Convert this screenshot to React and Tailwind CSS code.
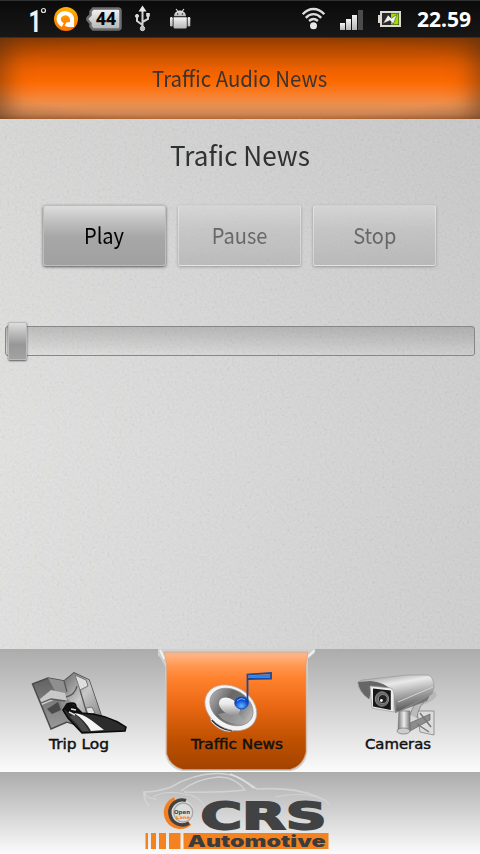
import React from "react";

function StatusBar() {
  return (
    <header className="h-[38px] w-full shrink-0 border-y border-[#303030] bg-gradient-to-b from-[#0b0b0b] to-[#171717]">
      <svg width="480" height="36" viewBox="0 1 480 36" className="block overflow-visible">
        <defs>
          <linearGradient id="silver" x1="0" y1="0" x2="0" y2="1">
            <stop offset="0" stopColor="#f4f4f4" />
            <stop offset="1" stopColor="#b4b4b4" />
          </linearGradient>
          <linearGradient id="amber" x1="0" y1="0" x2="0" y2="1">
            <stop offset="0" stopColor="#ffb400" />
            <stop offset="1" stopColor="#ff7200" />
          </linearGradient>
        </defs>
        <text x="28.5" y="31.5" fontFamily="Roboto, sans-serif" fontWeight="700" fontSize="32" textLength="13" lengthAdjust="spacingAndGlyphs" fill="#f2f2f2">1</text>
        <circle cx="43.5" cy="10.5" r="2" fill="none" stroke="#e4e4e4" strokeWidth="1.2" />
        <circle cx="66" cy="19" r="12" fill="url(#amber)" />
        <path d="M62.8 25.2C56.8 22 57.8 15 63 13.6C68 12.2 72 15.4 72 19.5V25H67.5" fill="none" stroke="#fff" strokeWidth="4.2" />
        <circle cx="66.6" cy="20.4" r="3.1" fill="#ff8c00" />
        <path d="M64.6 25.5L66.4 22.5L70 22V26.4H66Z" fill="#fff" />
        <path d="M93 8.5H118Q120.5 8.5 120.5 11V27Q120.5 29.5 118 29.5H93L90.5 26.5V23.5L87.5 20V18L90.5 15V11.5Z" fill="url(#silver)" stroke="#6c6c6c" strokeWidth="2.5" />
        <text x="96" y="25.2" fontFamily="'Noto Sans', sans-serif" fontWeight="800" fontSize="17" textLength="20" lengthAdjust="spacingAndGlyphs" fill="#080808">44</text>
        <g fill="none" stroke="#d4d4d4" strokeWidth="2">
          <path d="M142.5 10V28M142.5 25L137 21V16M142.5 22L148 19V15" />
          <circle cx="142.5" cy="28.5" r="2.2" fill="#bbb" strokeWidth="1" />
          <circle cx="137" cy="16" r="1.6" fill="#ddd" strokeWidth="1" />
          <rect x="146.2" y="13" width="3.6" height="3.6" fill="#ddd" stroke="none" />
          <path d="M142.5 5.5L146.5 11.5H138.5Z" fill="#e9e9e9" stroke="none" />
        </g>
        <g fill="url(#silver)">
          <path d="M174 16.3C174 13.5 175.5 12 177.2 11.2L175.6 9.2L176.4 8.8L178 10.8Q180 10.2 182 10.8L183.6 8.8L184.4 9.2L182.8 11.2C184.5 12 186 13.5 186 16.3Z" />
          <path d="M173.5 17.3H186.8V27Q186.8 28.6 185 28.6H175Q173.5 28.6 173.5 27Z" />
          <rect x="170" y="17" width="2.7" height="9.4" rx="1.2" />
          <rect x="187.6" y="17" width="2.7" height="9.4" rx="1.2" />
        </g>
        <circle cx="177.7" cy="14" r=".7" fill="#222" />
        <circle cx="182.5" cy="14" r=".7" fill="#222" />
        <g fill="none" stroke="#dcdcdc" strokeWidth="2.4">
          <path d="M302.7 14.2C309 7.3 318 7.3 324.3 14.2" />
          <path d="M305.8 17.8C310.5 12.9 316.5 12.9 321.2 17.8" />
          <path d="M309.1 21C312 18.3 315 18.3 317.9 21" />
        </g>
        <circle cx="313.5" cy="25.8" r="3.5" fill="#e8e8e8" />
        <g fill="url(#silver)">
          <rect x="340" y="23" width="5" height="7" />
          <rect x="346" y="19" width="5" height="11" />
          <rect x="352" y="15" width="5" height="15" />
        </g>
        <rect x="358" y="10" width="5" height="20" fill="#4c4c4c" />
        <path d="M380 11H401V27H380V23H378V15H380Z" fill="#dedacf" />
        <rect x="382" y="13" width="17" height="12" fill="#292929" />
        <rect x="391" y="13.5" width="7.5" height="11" fill="#9be000" />
        <path d="M383 23.5L388 15L391.3 18.2L397 14.5L393.3 24L390 20.5Z" fill="#f0f0f0" stroke="#333" strokeWidth=".5" />
        <text x="417" y="27" fontFamily="'Noto Sans', sans-serif" fontWeight="700" fontSize="21" textLength="54" lengthAdjust="spacingAndGlyphs" fill="#fff">22.59</text>
      </svg>
    </header>
  );
}

function AudioButton({ label, enabled = false }) {
  const look = enabled
    ? "border-[#bdbdbd] bg-[linear-gradient(180deg,#dddddd_0%,#c3c3c3_23%,#a7a7a7_52%,#a1a1a1_100%)] text-black shadow-[0_1px_3px_0px_rgba(0,0,0,0.6)]"
    : "border-white/35 bg-[linear-gradient(180deg,rgba(215,215,215,.65)_0%,rgba(190,190,190,.6)_40%,rgba(174,174,174,.65)_100%)] text-[#686868] shadow-[0_1px_3px_0px_rgba(0,0,0,0.28)]";
  return (
    <button className={`flex h-[61px] w-[123px] items-center justify-center rounded-[3px] border pb-[3px] text-[22px] leading-none ${look}`}>
      <span className="block scale-x-[.91]">{label}</span>
    </button>
  );
}

function MapIcon() {
  return (
    <svg x="30" y="670" width="98" height="66" viewBox="30 670 98 66">
      <defs>
        <linearGradient id="mapA" x1="0" y1="0" x2="0" y2="1">
          <stop offset="0" stopColor="#5c5c5c" /><stop offset="1" stopColor="#9a9a9a" />
        </linearGradient>
        <linearGradient id="mapB" x1="0" y1="0" x2="1" y2="1">
          <stop offset="0" stopColor="#6b6b6b" /><stop offset=".5" stopColor="#c8c8c8" /><stop offset="1" stopColor="#858585" />
        </linearGradient>
      </defs>
      <path d="M32.5 684L48 678L64 681L74 673L89 680L102 718L86 728L67 722L51 729Z" fill="url(#mapA)" stroke="#4b4b4b" strokeWidth="1.5" />
      <path d="M48 678L64 681L72 697L78 716L67 722L60 700Z" fill="#8f8f8f" />
      <path d="M64 681L74 673L89 680L102 718L84 716L66 697Z" fill="url(#mapB)" />
      <path d="M40 699L51 690L65 693L67 700L54 700L42 705Z" fill="#c9c9c9" />
      <path d="M75 675L86 680L88 686L80 690ZM86 708L92 707L95 713L88 715Z" fill="#dedede" stroke="#777" />
      <path d="M47 709L58 702L61 710L52 714Z" fill="#4a4a4a" />
      <path d="M41 703L51 699L65 701M64 681L67 692M66 697Q75 695 77 686M80 690L87 714" fill="none" stroke="#595959" strokeWidth="1.3" />
      <path d="M67 704Q76 701 76 707L82 713Q107 714 126 727L125 731L82 733L68 718L63 710Z" fill="#2c2c2c" stroke="#080808" strokeWidth="1.5" />
      <path d="M64 709Q65 703 72 704L78 709L82 714L70 714Z" fill="#101010" />
      <path d="M74 713Q83 714 91 720L104 730L91 731Q85 720 74 713Z" fill="#f5f5f5" />
      <path d="M70 717Q77 723 82 731L89 731Q82 719 74 714Z" fill="#4d4d4d" />
      <path d="M71 709L76 710M69 712L75 715" stroke="#ddd" strokeWidth="1.5" />
    </svg>
  );
}

function SpeakerIcon() {
  return (
    <svg x="200" y="670" width="76" height="66" viewBox="200 670 76 66">
      <defs>
        <linearGradient id="cone" x1="0" y1="0" x2="1" y2="0">
          <stop offset="0" stopColor="#a8a8a8" /><stop offset=".35" stopColor="#686868" /><stop offset=".6" stopColor="#6f6f6f" /><stop offset="1" stopColor="#bbb" />
        </linearGradient>
        <linearGradient id="core" x1="0" y1="0" x2="1" y2="1">
          <stop offset="0" stopColor="#fff" /><stop offset=".4" stopColor="#e9e9e9" /><stop offset="1" stopColor="#777" />
        </linearGradient>
        <radialGradient id="blueBall" cx=".5" cy=".75">
          <stop offset="0" stopColor="#65b8ff" /><stop offset="1" stopColor="#0749ce" />
        </radialGradient>
      </defs>
      <path d="M209 712L211 722Q219 731 229 732Q233 732 236 728Z" fill="#f0f0f0" stroke="#888" strokeWidth=".7" />
      <path d="M212 720Q220 729 232 730.5" fill="none" stroke="#292929" strokeWidth="2" />
      <ellipse cx="230.8" cy="707.8" rx="27.5" ry="21" transform="rotate(31 230.8 707.8)" fill="#f4f4f4" stroke="#b5aaa3" strokeWidth=".7" />
      <ellipse cx="231.5" cy="707" rx="23" ry="17" transform="rotate(31 231.5 707)" fill="url(#cone)" stroke="#888" strokeWidth=".7" />
      <path d="M218 714Q223 723 237 724Q242 724 245 721L236 711Z" fill="#a9a9a9" opacity=".6" />
      <ellipse cx="229.5" cy="706.5" rx="11.5" ry="7.6" transform="rotate(33 229.5 706.5)" fill="url(#core)" />
      <path d="M247.5 703V674.5L271 673V678.5L248 679" fill="none" stroke="#17499f" strokeWidth="1.8" />
      <path d="M249 675.5L270 674.5V677.5L249 678Z" fill="#2585f2" />
      <ellipse cx="241.5" cy="703" rx="6.8" ry="6" fill="url(#blueBall)" stroke="#0940ae" strokeWidth=".8" />
      <path d="M237 701Q241 697 245 700" fill="none" stroke="#7db8f8" />
    </svg>
  );
}

function CameraIcon() {
  return (
    <svg x="355" y="670" width="84" height="68" viewBox="355 670 84 68">
      <defs>
        <linearGradient id="camTop" x1="0" y1="0" x2=".35" y2="1">
          <stop offset="0" stopColor="#888" /><stop offset=".35" stopColor="#eaeaea" /><stop offset=".65" stopColor="#a9a9a9" /><stop offset="1" stopColor="#626262" />
        </linearGradient>
        <linearGradient id="metal">
          <stop offset="0" stopColor="#777" /><stop offset=".5" stopColor="#eee" /><stop offset="1" stopColor="#777" />
        </linearGradient>
      </defs>
      <ellipse cx="424" cy="698" rx="13" ry="6" transform="rotate(-20 424 698)" fill="#aaa" opacity=".55" />
      <path d="M417 711L434 711V735L420 732Z" fill="#dcdcdc" stroke="#777" strokeWidth=".7" />
      <path d="M410 723L430 714V720L410 731Z" fill="#8d8d8d" stroke="#666" strokeWidth=".7" />
      <path d="M417 724L429 732M420 713L431 727" stroke="#777" strokeWidth="1.5" />
      <path d="M410 715Q413 704 421 700L424 702Q418 708 417 718" fill="#bbb" stroke="#777" strokeWidth=".7" />
      <path d="M399 711H410V731Q404 735 398 731Z" fill="url(#metal)" stroke="#777" strokeWidth=".7" />
      <ellipse cx="403.5" cy="731" rx="6.5" ry="3" fill="#ccc" stroke="#777" strokeWidth=".7" />
      <path d="M395 713L427 701L432 691L394 699Z" fill="#777" />
      <path d="M358 682L362 680L407 675L428 675Q434 677 434 687L432 694L400 711L396 712Q395 693 388 690L372 687L369 699Q359 692 358 684Z" fill="url(#camTop)" stroke="#999" strokeWidth=".7" />
      <path d="M358 682L371 681Q386 683 391 690L372 687L369 699Q359 692 358 682Z" fill="#666" />
      <path d="M370 686L391 688Q394 690 394 694V712L372 708Z" fill="#ededed" stroke="#999" strokeWidth=".7" />
      <path d="M373 688.5L390.8 690.5V710L373 706.5Z" fill="#171717" />
      <ellipse cx="382" cy="699" rx="6.7" ry="7.2" fill="#666" stroke="#8a8a8a" strokeWidth="1" />
      <circle cx="382.8" cy="699" r="4.5" fill="#222" stroke="#999" strokeWidth=".8" />
      <circle cx="381.4" cy="700.5" r="1.4" fill="#fff" />
      <path d="M398 702L433 687" stroke="#d4d4d4" />
    </svg>
  );
}

function NavTabs() {
  return (
    <nav className="h-[123px] shrink-0 bg-gradient-to-b from-[#acacac] to-[#fbfbfb]">
      <svg width="480" height="123" viewBox="0 649 480 123" className="block">
        <defs>
          <linearGradient id="selected" x1="0" y1="0" x2="0" y2="1">
            <stop offset="0" stopColor="#e4b99d" /><stop offset=".03" stopColor="#ffb281" /><stop offset=".12" stopColor="#ff9650" /><stop offset=".23" stopColor="#ff812d" /><stop offset=".45" stopColor="#eb6914" /><stop offset=".75" stopColor="#be5000" /><stop offset="1" stopColor="#a34300" />
          </linearGradient>
        </defs>
        <path d="M158 649H315.5L314.5 653L308 659L307.3 752Q305 768 291 771H182Q168 768 165.3 754V667L160 657L158 656Z" fill="#cfcfcf" />
        <path d="M160 650L164.5 659M314.5 650.5L308 656.5" fill="none" stroke="#f1f1f1" strokeWidth="2" />
        <path d="M164 652H308L306 664V752Q303 766 290 769.5H183Q170 766 166.7 754V664Z" fill="url(#selected)" stroke="#db9d74" strokeWidth=".6" />
        <MapIcon />
        <SpeakerIcon />
        <CameraIcon />
        <g fontFamily="'DejaVu Sans', sans-serif" fontSize="14" fill="#111" stroke="#111" strokeWidth=".45">
          <text x="49" y="749" textLength="60" lengthAdjust="spacingAndGlyphs">Trip Log</text>
          <text x="191" y="749" textLength="92" lengthAdjust="spacingAndGlyphs">Traffic News</text>
          <text x="365" y="749" textLength="66" lengthAdjust="spacingAndGlyphs">Cameras</text>
        </g>
      </svg>
    </nav>
  );
}

function BrandFooter() {
  return (
    <footer className="h-[82px] shrink-0 bg-gradient-to-b from-[#acacac] to-[#fbfbfb]">
      <svg width="480" height="82" viewBox="0 772 480 82" className="block">
        <g fill="none" stroke="#d1d2d3" strokeWidth="1.7">
          <path d="M150 806Q144 803 144 792Q157 792 171 787Q193 774 216 773.5Q232 773.5 241 779L257 789Q294 787 315 796Q327 800 329 805" />
          <path d="M181 791Q196 779 218 777Q235 777 245 790Q218 793 184 792" strokeWidth="1.3" />
          <path d="M153 797Q165 790 184 794Q199 795 205 807M145 792Q145 799 157 799" strokeWidth="1.1" />
          <path d="M230 774Q244 779 254 788" stroke="#dedede" />
          <path d="M275 797Q299 792 316 797" strokeWidth="1" />
        </g>
        <circle cx="180.5" cy="813" r="13.5" fill="#dddddd" />
        <path d="M175 799.5A14 14 0 1 0 189.5 823" fill="none" stroke="#f57f20" strokeWidth="5" />
        <path d="M186 800.5A12.5 12.5 0 1 0 189 823" fill="none" stroke="#414244" strokeWidth="3.4" />
        <circle cx="183.3" cy="812.5" r="9.5" fill="none" stroke="#a9a9a9" strokeWidth="1.5" />
        <text x="174" y="813.5" fontFamily="'DejaVu Sans', sans-serif" fontWeight="700" fontSize="5.5" textLength="16" lengthAdjust="spacingAndGlyphs" fill="#414244">Open</text>
        <text x="176" y="818.8" fontFamily="'DejaVu Sans', sans-serif" fontWeight="700" fontSize="4.5" textLength="14" lengthAdjust="spacingAndGlyphs" fill="#f58220">Lane</text>
        <text x="200.5" y="828.5" fontFamily="'DejaVu Sans', sans-serif" fontWeight="700" fontSize="36.5" textLength="126" lengthAdjust="spacingAndGlyphs" fill="#414244" stroke="#414244" strokeWidth="1.8" strokeLinejoin="miter">CRS</text>
        <g fill="#f58220">
          <rect x="145.5" y="833" width="2.5" height="16" />
          <rect x="151" y="833" width="5" height="16" />
          <rect x="159" y="833" width="7" height="16" />
          <rect x="169" y="833" width="11.5" height="16" />
          <rect x="183.5" y="833" width="145" height="16" />
        </g>
        <text x="187.5" y="847" fontFamily="Inter, sans-serif" fontWeight="900" fontSize="16" textLength="138" lengthAdjust="spacingAndGlyphs" fill="#3c3b3b">Automotive</text>
      </svg>
    </footer>
  );
}

export default function App() {
  return (
    <div className="flex h-[854px] w-[480px] flex-col overflow-hidden font-['Noto_Sans_CJK_SC',sans-serif]">
      <StatusBar />
      <div className="flex h-[81px] shrink-0 items-center justify-center bg-[radial-gradient(ellipse_at_center,transparent_72%,rgba(70,45,25,.2)_100%),linear-gradient(180deg,#a44300_0%,#c65200_20%,#ed6100_39%,#fb6900_53%,#fa7920_66%,#ee9251_82%,#df935f_94%,#cf7c43_100%)] pb-[3px] shadow-[inset_16px_0_22px_-8px_rgba(80,45,20,.5),inset_-16px_0_22px_-8px_rgba(80,45,20,.5)]">
        <h1 className="scale-x-[.925] text-[22px] leading-none text-[#3b3330]">Traffic Audio News</h1>
      </div>
      <main className="relative isolate flex h-[530px] shrink-0 flex-col bg-[linear-gradient(180deg,rgba(150,150,150,.16),rgba(200,200,200,0)_60%),linear-gradient(100deg,#e3e3e2,#dbdbdb_40%,#d1d2d1_80%,#cecece)]">
        <svg width="480" height="530" className="pointer-events-none absolute inset-0 -z-10 opacity-[.05]">
          <filter id="paper"><feTurbulence type="fractalNoise" baseFrequency=".4" numOctaves="2" seed="8" /><feColorMatrix type="matrix" values="1.2 1.2 0 0 -.6 1.2 1.2 0 0 -.6 1.2 1.2 0 0 -.6 0 0 0 0 1" /></filter>
          <rect width="480" height="530" filter="url(#paper)" />
        </svg>
        <h2 className="mt-[22px] scale-x-[.967] text-center text-[27px] leading-[28px] text-[#303132]">Trafic News</h2>
        <div className="mt-[36px] ml-[43px] flex gap-[12px]">
          <AudioButton label="Play" enabled />
          <AudioButton label="Pause" />
          <AudioButton label="Stop" />
        </div>
        <div className="mt-[60px] ml-[5px] flex h-[30px] w-[470px] items-center rounded-[3px] border border-[#878787] bg-gradient-to-b from-black/15 to-black/0 pl-[2px]">
          <div className="h-[38px] w-[19px] shrink-0 rounded-[2px] border border-[#bbb] bg-[linear-gradient(180deg,#dddddd,#979797_60%,#a3a3a3)] shadow-[0_1px_2px_0px_rgba(0,0,0,.6)]" />
        </div>
      </main>
      <NavTabs />
      <BrandFooter />
    </div>
  );
}
